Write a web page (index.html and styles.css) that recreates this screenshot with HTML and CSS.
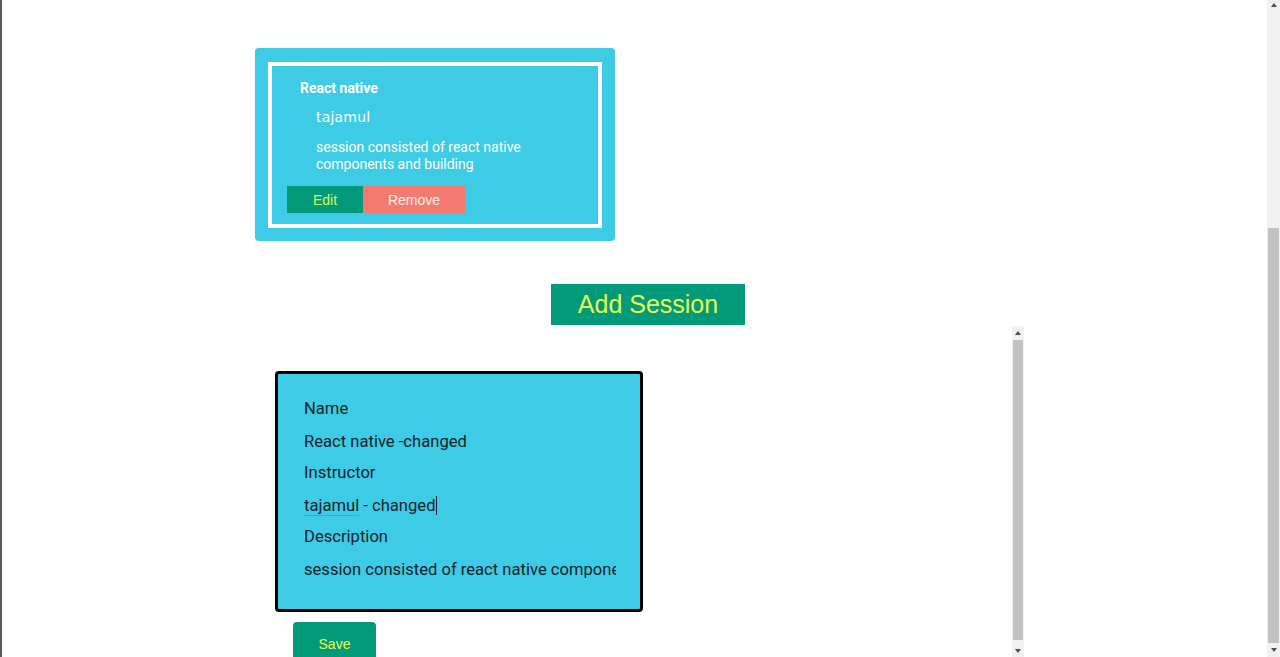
FILE: index.html
```html
<!DOCTYPE html>
<html lang="en">
<head>
<meta charset="utf-8">
<title>Sessions</title>
<link rel="stylesheet" href="styles.css">
</head>
<body>
<div class="page">
  <main class="content">
    <section class="card">
      <div class="card-inner">
        <h3 class="card-title">React native</h3>
        <p class="card-instructor">tajamul</p>
        <p class="card-desc">session consisted of react native components and building</p>
        <div class="card-actions">
          <button class="btn btn-edit">Edit</button>
          <button class="btn btn-remove">Remove</button>
        </div>
      </div>
    </section>

    <button class="btn-add">Add Session</button>

    <div class="scroller">
      <div class="scroller-body">
        <form class="session-form">
          <label class="field-label">Name</label>
          <input class="field-input" type="text" value="React native -changed">
          <label class="field-label">Instructor</label>
          <div class="field-input fake-input"><span class="misspelled">tajamul</span> - changed<span class="caret"></span></div>
          <label class="field-label">Description</label>
          <input class="field-input" type="text" value="session consisted of react native components and building">
        </form>
        <button class="btn-save">Save</button>
      </div>
      <div class="scrollbar inner-bar">
        <div class="sb-arrow up"></div>
        <div class="sb-thumb"></div>
        <div class="sb-arrow down"></div>
      </div>
    </div>
  </main>
  <div class="scrollbar page-bar">
    <div class="sb-arrow up"></div>
    <div class="sb-track-top"></div>
    <div class="sb-thumb"></div>
    <div class="sb-arrow down"></div>
  </div>
</div>
</body>
</html>
```

FILE: styles.css
```css
* { box-sizing: border-box; }
html, body {
  margin: 0;
  padding: 0;
  height: 657px;
  overflow: hidden;
  background: #ffffff;
  font-family: Roboto, "Liberation Sans", Arial, sans-serif;
}
.page {
  display: flex;
  height: 657px;
  border-left: 2px solid #5a5a5a;
}
.content {
  flex: 1;
  padding-left: 253px;
  padding-top: 48px;
  display: flex;
  flex-direction: column;
  align-items: flex-start;
  overflow: hidden;
}

/* Session card */
.card {
  flex-shrink: 0;
  width: 360px;
  height: 193px;
  background: #3ecbe5;
  border-radius: 4px;
  padding: 14px 13px 13px 13px;
}
.card-inner {
  width: 334px;
  height: 166px;
  border: 4px solid #ffffff;
  padding: 14px 0 0 15px;
}
.card-title {
  margin: 0 0 0 13px;
  font-size: 14px;
  line-height: 16px;
  font-weight: 700;
  color: #ffffff;
}
.card-instructor {
  margin: 12px 0 0 29px;
  font-family: "Comic Sans MS", "DejaVu Sans", sans-serif;
  font-size: 14px;
  line-height: 18px;
  color: #ffffff;
  letter-spacing: 0.2px;
}
.card-desc {
  margin: 13px 0 0 29px;
  width: 245px;
  font-size: 14px;
  line-height: 17px;
  color: #ffffff;
}
.card-actions {
  display: flex;
  margin-top: 13px;
}
.btn {
  border: none;
  height: 27px;
  font-family: "Liberation Sans", Arial, sans-serif;
  font-size: 14px;
  padding: 0;
}
.btn-edit {
  width: 76px;
  background: #029a7a;
  color: #d9f75b;
}
.btn-remove {
  width: 102px;
  background: #f47a70;
  color: #fdeeee;
}

/* Add session */
.btn-add {
  flex-shrink: 0;
  margin: 43px 0 0 296px;
  width: 194px;
  height: 41px;
  border: none;
  padding: 0;
  background: #029a7a;
  color: #e3fd50;
  font-family: "Liberation Sans", Arial, sans-serif;
  font-size: 25px;
}

/* Inner scroller */
.scroller {
  flex-shrink: 0;
  margin-top: 1px;
  width: 769px;
  height: 331px;
  display: flex;
}
.scroller-body {
  flex: 1;
  padding: 45px 0 0 20px;
  display: flex;
  flex-direction: column;
  align-items: flex-start;
  overflow: hidden;
}
.session-form {
  flex-shrink: 0;
  width: 368px;
  height: 241px;
  border: 3px solid #000000;
  border-radius: 4px;
  background: #3ecbe5;
  padding: 25px 0 0 26px;
  display: flex;
  flex-direction: column;
  align-items: flex-start;
}
.field-label {
  font-size: 16.6px;
  line-height: 20px;
  color: #16232c;
}
.field-input {
  width: 312px;
  height: 20px;
  margin: 13px 0 11px 0;
  padding: 0;
  border: none;
  outline: none;
  background: transparent;
  font-family: Roboto, "Liberation Sans", Arial, sans-serif;
  font-size: 16.6px;
  line-height: 20px;
  color: #16232c;
  white-space: nowrap;
  overflow: hidden;
}
.misspelled {
  padding-bottom: 2px;
  background-image: linear-gradient(45deg, transparent 35%, #8c8c8c 35%, #8c8c8c 65%, transparent 65%),
                    linear-gradient(-45deg, transparent 35%, #8c8c8c 35%, #8c8c8c 65%, transparent 65%);
  background-size: 3px 2px;
  background-repeat: repeat-x;
  background-position: 0 100%;
}
.caret {
  display: inline-block;
  width: 1px;
  height: 19px;
  background: #16232c;
  vertical-align: -4px;
}
.btn-save {
  flex-shrink: 0;
  margin: 10px 0 0 18px;
  width: 83px;
  height: 44px;
  border: none;
  border-radius: 4px;
  padding: 0;
  background: #029a7a;
  color: #e3fd50;
  font-family: "Liberation Sans", Arial, sans-serif;
  font-size: 14px;
}

/* Scrollbars */
.scrollbar {
  display: flex;
  flex-direction: column;
  background: #f1f1f1;
}
.inner-bar {
  width: 12px;
}
.page-bar {
  width: 13px;
  height: 657px;
}
.sb-arrow {
  height: 14px;
  display: flex;
  align-items: center;
  justify-content: center;
}
.sb-arrow::before {
  content: "";
  border-left: 3px solid transparent;
  border-right: 3px solid transparent;
}
.sb-arrow.up::before { border-bottom: 4px solid #505050; }
.sb-arrow.down::before { border-top: 4px solid #505050; }
.inner-bar .sb-thumb {
  height: 300px;
  margin: 0 1px;
  background: #c1c1c1;
}
.inner-bar .sb-arrow.down { margin-top: auto; height: 13px; }
.page-bar .sb-arrow.up { height: 10px; }
.page-bar .sb-track-top { height: 218px; }
.page-bar .sb-thumb {
  height: 415px;
  margin: 0 1px;
  background: #c1c1c1;
}
.page-bar .sb-arrow.down { margin-top: auto; }
```
